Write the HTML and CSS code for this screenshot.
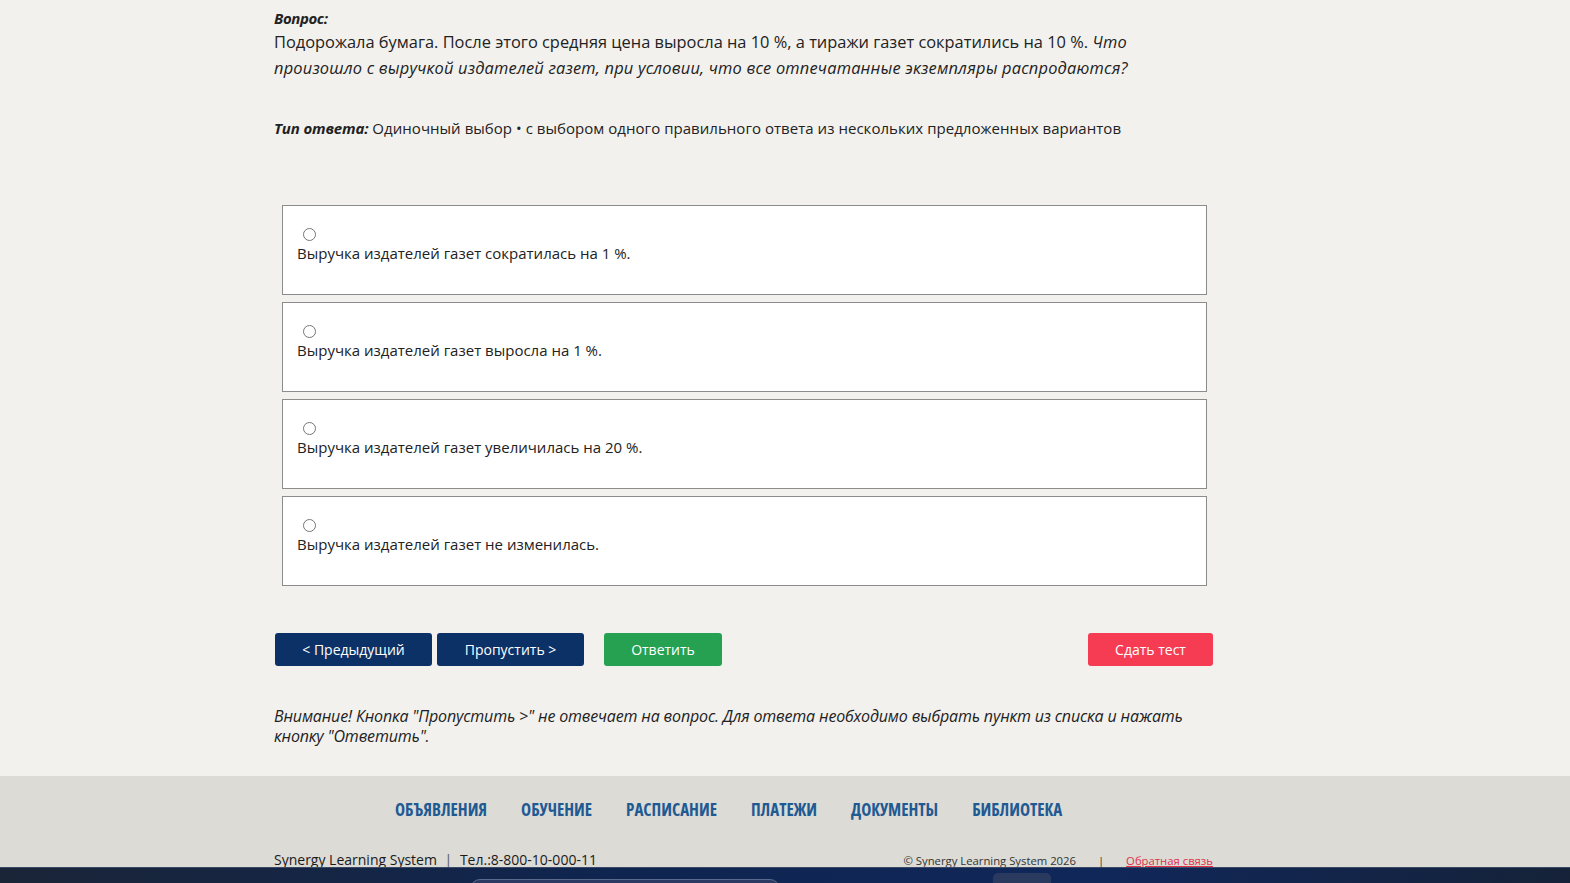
FILE: index.html
```html
<!DOCTYPE html>
<html lang="ru">
<head>
    <meta charset="UTF-8">
    <meta name="viewport" content="width=device-width, initial-scale=1.0">
    <title>Тестирование</title>
    <link rel="stylesheet" href="styles.css">
</head>
<body>
    <div class="page">
        <div class="test">
            <div class="question-label">Вопрос:</div>
            <p class="question-text">
                Подорожала бумага. После этого средняя цена выросла на 10 %, а тиражи газет сократились на 10 %.
                <em>Что произошло с выручкой издателей газет, при условии, что все отпечатанные экземпляры распродаются?</em>
            </p>

            <p class="answer-type"><b>Тип ответа:</b> Одиночный выбор • с выбором одного правильного ответа из нескольких предложенных вариантов</p>

            <form class="options">
                <label class="option">
                    <input type="radio" name="answer" value="1">
                    <span>Выручка издателей газет сократилась на 1 %.</span>
                </label>
                <label class="option">
                    <input type="radio" name="answer" value="2">
                    <span>Выручка издателей газет выросла на 1 %.</span>
                </label>
                <label class="option">
                    <input type="radio" name="answer" value="3">
                    <span>Выручка издателей газет увеличилась на 20 %.</span>
                </label>
                <label class="option">
                    <input type="radio" name="answer" value="4">
                    <span>Выручка издателей газет не изменилась.</span>
                </label>
            </form>

            <div class="actions">
                <button class="btn btn-nav btn-prev">&lt; Предыдущий</button>
                <button class="btn btn-nav btn-skip">Пропустить &gt;</button>
                <button class="btn btn-answer">Ответить</button>
                <button class="btn btn-finish">Сдать тест</button>
            </div>

            <p class="notice">Внимание! Кнопка "Пропустить &gt;" не отвечает на вопрос. Для ответа необходимо выбрать пункт из списка и нажать кнопку "Ответить".</p>
        </div>

        <footer class="footer">
            <nav class="footer-nav">
                <a href="#">Объявления</a>
                <a href="#">Обучение</a>
                <a href="#">Расписание</a>
                <a href="#">Платежи</a>
                <a href="#">Документы</a>
                <a href="#">Библиотека</a>
            </nav>
            <div class="footer-bottom">
                <div class="brand">Synergy Learning System <span class="sep">|</span> Тел.:8-800-10-000-11</div>
                <div class="copy">© Synergy Learning System 2026 <span class="sep">|</span> <a href="#">Обратная связь</a></div>
            </div>
        </footer>
    </div>

    <div class="taskbar">
        <div class="taskbar-search"></div>
        <div class="taskbar-item"></div>
    </div>
</body>
</html>
```

FILE: styles.css
```css
:root {
    --navy: #0c3166;
    --text: #222;
    --link: #1f5a93;
}

body {
    margin: 0;
    background: #f2f1ee;
    color: var(--text);
    font-family: 'Open Sans', 'DejaVu Sans', sans-serif;
    overflow: hidden;
}

.test {
    width: 939px;
    margin-left: 274px;
    padding-top: 8px;
}

.question-label {
    font-size: 15px;
    font-weight: 700;
    font-style: italic;
    line-height: 20px;
    letter-spacing: -0.4px;
}

.question-text {
    margin: 0;
    font-size: 16.4px;
    line-height: 26px;
    margin-top: 1px;
}

.question-text em {
    letter-spacing: 0.2px;
}

.answer-type {
    margin: 37px 0 0;
    font-size: 15px;
    line-height: 20px;
    letter-spacing: 0.04px;
}

.answer-type b {
    font-style: italic;
    letter-spacing: -0.15px;
}

.options {
    display: grid;
    gap: 7px;
    margin: 67px 6px 0 8px;
}

.option {
    display: flex;
    flex-direction: column;
    align-items: flex-start;
    box-sizing: border-box;
    height: 90px;
    padding: 22px 14px 0;
    background: #fff;
    border: 1px solid #8c8c8c;
    font-size: 15px;
    line-height: 20px;
    cursor: pointer;
}

.option input {
    width: 13px;
    height: 13px;
    margin: 0 0 2px 6px;
}

.actions {
    display: flex;
    gap: 5px;
    margin-top: 47px;
    margin-left: 1px;
}

.btn {
    height: 33px;
    border: none;
    border-radius: 3px;
    color: #fff;
    font-family: inherit;
    font-size: 14px;
    cursor: pointer;
}

.btn-nav {
    background: var(--navy);
}

.btn-prev {
    width: 157px;
}

.btn-skip {
    width: 147px;
}

.btn-answer {
    width: 118px;
    margin-left: 15px;
    background: #26a152;
}

.btn-finish {
    width: 125px;
    margin-left: auto;
    background: #f53c53;
}

.notice {
    margin: 40px 0 0;
    font-size: 16px;
    line-height: 20px;
    font-style: italic;
    letter-spacing: -0.16px;
    padding-bottom: 30px;
}

.footer {
    background: #dcdbd6;
    padding-top: 24px;
    height: 108px;
    box-sizing: border-box;
}

.footer-nav {
    display: flex;
    gap: 34px;
    margin-left: 395px;
    line-height: 20px;
}

.footer-nav a {
    color: var(--link);
    text-decoration: none;
    text-transform: uppercase;
    font-weight: 700;
    font-size: 17px;
    font-stretch: condensed;
}

.footer-bottom {
    display: flex;
    justify-content: space-between;
    align-items: baseline;
    width: 939px;
    margin: 30px 0 0 274px;
    line-height: 20px;
}

.brand {
    font-size: 14px;
    color: #1a1a1a;
}

.brand .sep {
    margin: 0 4px;
    color: #555;
}

.copy {
    font-size: 11.3px;
    color: #333;
}

.copy .sep {
    margin: 0 19px;
}

.copy a {
    color: #e0304a;
}

.taskbar {
    position: fixed;
    left: 0;
    right: 0;
    bottom: 0;
    height: 15px;
    background: linear-gradient(90deg, #1b2538 0%, #0f2550 40%, #10275a 70%, #152238 100%);
    border-top: 1px solid #3a4a66;
    overflow: hidden;
}

.taskbar-search {
    position: absolute;
    left: 470px;
    top: 11px;
    width: 308px;
    height: 30px;
    border-radius: 10px;
    border: 1px solid #5a6a8c;
    background: #2a3a62;
}

.taskbar-item {
    position: absolute;
    left: 993px;
    top: 5px;
    width: 58px;
    height: 30px;
    border-radius: 5px;
    background: #2a3a5e;
}
```
